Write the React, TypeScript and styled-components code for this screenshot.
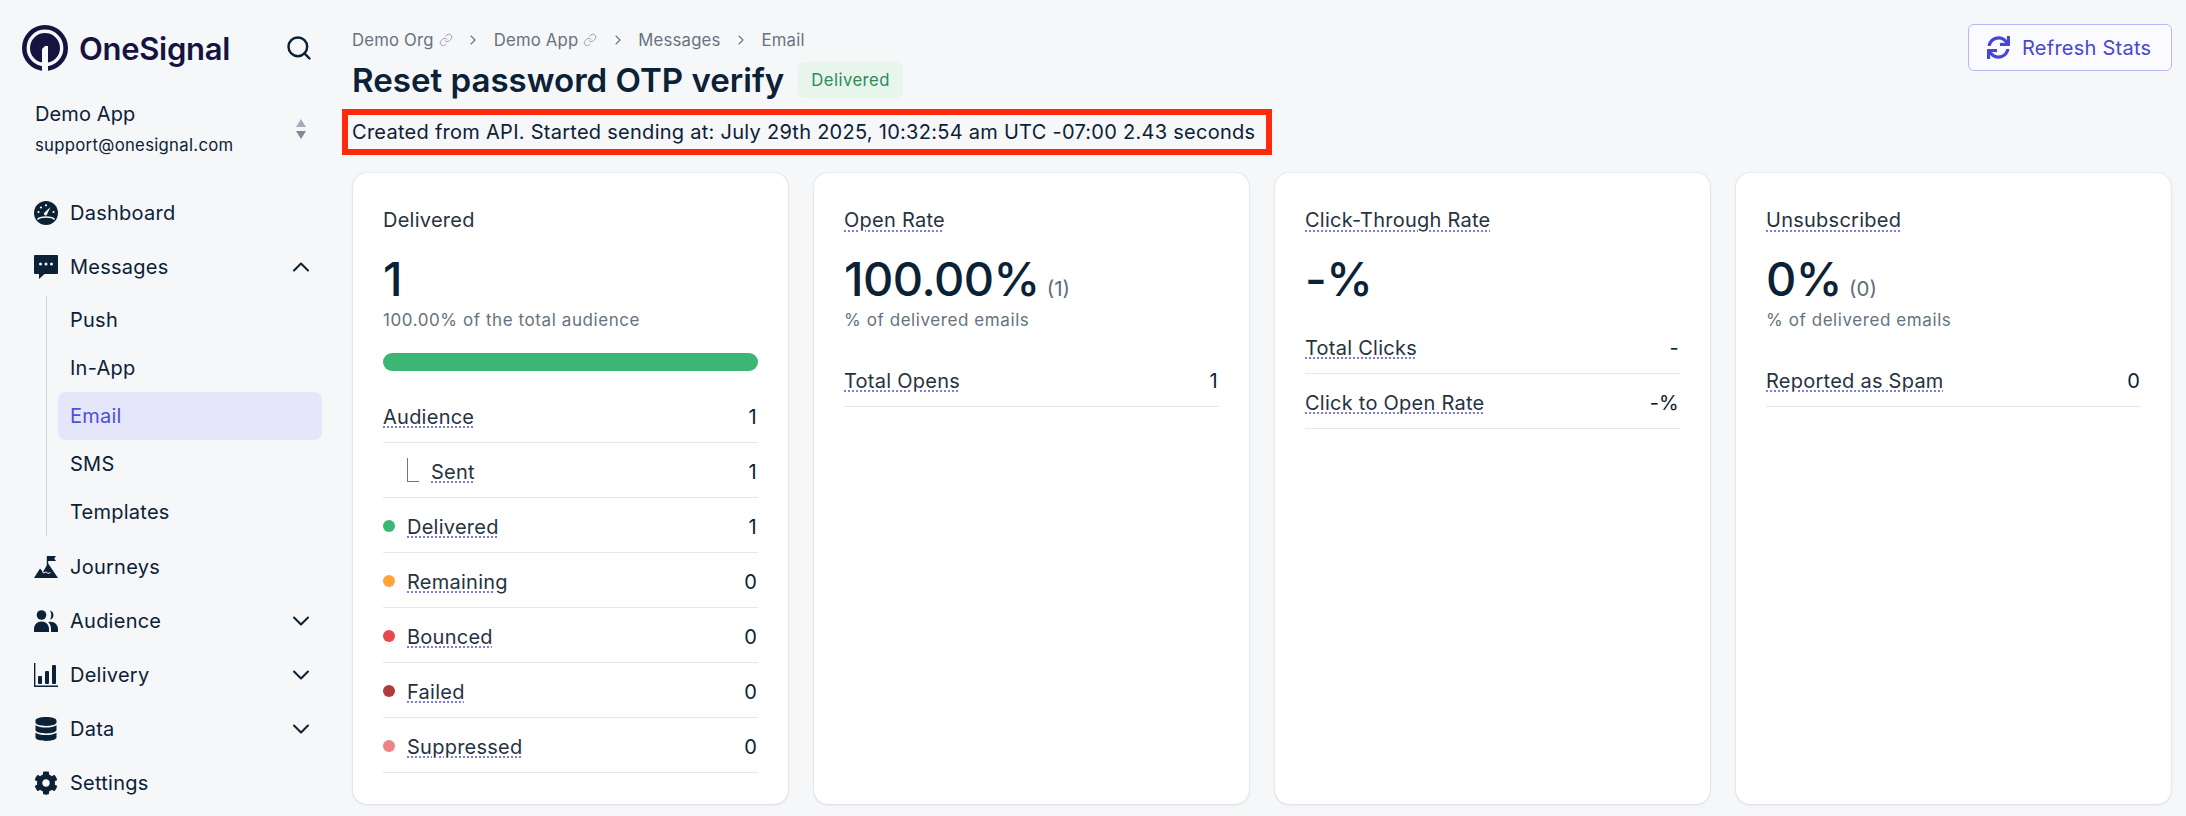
import React from 'react';
import styled, { createGlobalStyle } from 'styled-components';
import { ChevronDown, ChevronRight, ChevronUp, Link as LinkIcon, Search } from 'lucide-react';
import { FaCog, FaDatabase, FaSync } from 'react-icons/fa';

const GlobalStyle = createGlobalStyle`
  html, body {
    margin: 0;
    padding: 0;
    background: #f6f7f9;
    font-family: Inter, "Liberation Sans", sans-serif;
    color: #0b2136;
  }
  * { box-sizing: border-box; }
`;

const Page = styled.div`
  display: flex;
  width: 2186px;
  height: 816px;
  overflow: hidden;
  background: #f6f7f9;
`;

const Sidebar = styled.aside`
  flex: 0 0 342px;
  display: flex;
  flex-direction: column;
  padding-top: 25px;
`;

const LogoRow = styled.div`
  display: flex;
  align-items: center;
  height: 46px;
  padding: 0 29px 0 22px;
`;

const Wordmark = styled.span`
  margin-left: 11px;
  font-size: 31px;
  font-weight: 600;
  letter-spacing: -0.3px;
  color: #151440;
  flex: 1;
`;

const SearchButton = styled.span`
  display: flex;
  color: #0b2136;
`;

const AppSwitcher = styled.div`
  display: flex;
  align-items: center;
  justify-content: space-between;
  height: 115px;
  padding: 29px 36px 28px 35px;
`;

const AppName = styled.div`
  font-size: 20px;
  line-height: 28px;
  letter-spacing: 0.1px;
`;

const AppMail = styled.div`
  margin-top: 4px;
  font-size: 16.7px;
  line-height: 26px;
  letter-spacing: 0.3px;
`;

const Nav = styled.nav`
  display: flex;
  flex-direction: column;
`;

const NavItem = styled.div<{ $gap?: number }>`
  display: flex;
  align-items: center;
  height: 54px;
  margin-top: ${(p) => p.$gap ?? 0}px;
  padding: 0 27px 0 34px;
  font-size: 20px;
  letter-spacing: 0.25px;
`;

const NavIcon = styled.span`
  display: flex;
  align-items: center;
  justify-content: center;
  width: 24px;
  height: 24px;
  margin-right: 12px;
`;

const NavLabel = styled.span`
  flex: 1;
`;

const SubList = styled.div`
  display: flex;
  flex-direction: column;
  margin: 2px 0 0 46px;
  padding-left: 11px;
  width: 276px;
  border-left: 1.5px solid #ccd5de;
`;

const SubItem = styled.div<{ $active?: boolean }>`
  display: flex;
  align-items: center;
  height: 48px;
  padding-left: 12px;
  font-size: 20px;
  letter-spacing: 0.25px;
  border-radius: 8px;
  color: ${(p) => (p.$active ? '#4f4fd8' : '#0b2136')};
  background: ${(p) => (p.$active ? '#e5e6fa' : 'transparent')};
`;

const Main = styled.main`
  flex: 1;
  display: flex;
  flex-direction: column;
  min-width: 0;
  padding: 0 15px 12px 0;
`;

const TopBar = styled.div`
  display: flex;
  justify-content: space-between;
  padding-left: 10px;
`;

const Crumbs = styled.div`
  display: flex;
  align-items: center;
  height: 24px;
  margin-top: 28px;
  font-size: 16.7px;
  letter-spacing: 0.2px;
  color: #667280;
`;

const Crumb = styled.span`
  display: flex;
  align-items: center;
  gap: 5px;
`;

const CrumbSep = styled.span`
  display: flex;
  width: 41px;
  justify-content: center;
`;

const CrumbLink = styled.span`
  display: flex;
  color: #98a1ad;
`;

const RefreshButton = styled.button`
  display: flex;
  align-items: center;
  gap: 12px;
  height: 47px;
  width: 204px;
  margin: 24px -1px 0 0;
  padding: 0 0 0 18px;
  border: 1.5px solid #b7b8f5;
  border-radius: 6px;
  background: #fbfbff;
  color: #4747d1;
  font-family: inherit;
  font-size: 20px;
  letter-spacing: 0.25px;
`;

const TitleRow = styled.div`
  display: flex;
  align-items: center;
  gap: 14px;
  height: 36px;
  margin-top: -9px;
  padding-left: 10px;
`;

const Title = styled.h1`
  margin: 0;
  font-size: 33.1px;
  font-weight: 600;
  line-height: 36px;
  color: #0b2136;
`;

const Badge = styled.span`
  display: flex;
  align-items: center;
  height: 36px;
  padding: 0 13px;
  border-radius: 7px;
  background: #e7f5ec;
  color: #2f8a57;
  font-size: 16.7px;
  letter-spacing: 0.45px;
`;

const Meta = styled.div`
  align-self: flex-start;
  display: flex;
  align-items: center;
  height: 46px;
  margin-top: 11px;
  padding: 0 11px 0 4px;
  border: 6px solid #ff2a0c;
  font-size: 20px;
  letter-spacing: 0.27px;
  white-space: nowrap;
`;

const Cards = styled.div`
  flex: 1;
  display: grid;
  grid-template-columns: repeat(4, 435px);
  gap: 26px;
  margin: 18px 0 0 11px;
  min-height: 0;
`;

const Card = styled.section`
  display: flex;
  flex-direction: column;
  padding: 33px 30px 0;
  background: #fff;
  border-radius: 14px;
  box-shadow: 0 0 2px rgba(15, 30, 50, 0.16), 0 1px 3px rgba(15, 30, 50, 0.08);
`;

const Hint = styled.span`
  text-decoration: underline dotted #8079ee 2px;
  text-underline-offset: 3px;
`;

const CardTitle = styled.div`
  height: 28px;
  line-height: 28px;
  font-size: 20px;
  letter-spacing: 0.25px;
  color: #27323f;
`;

const BigRow = styled.div`
  display: flex;
  align-items: baseline;
  gap: 7px;
  height: 58px;
  margin-top: 16px;
  line-height: 58px;
  font-size: 47px;
  font-weight: 450;
  letter-spacing: -0.5px;
  color: #0b2136;
`;

const BigNote = styled.span`
  font-size: 20.5px;
  font-weight: 400;
  letter-spacing: 0;
  color: #5f6b7a;
`;

const SubText = styled.div`
  height: 24px;
  line-height: 24px;
  margin-bottom: 9px;
  font-size: 17px;
  letter-spacing: 0.58px;
  color: #667280;
`;

const Bar = styled.div`
  height: 18px;
  margin: 12px 0 6px;
  border-radius: 9px;
  background: #3cb675;
`;

const Rows = styled.div`
  display: flex;
  flex-direction: column;
  margin-top: 11px;
`;

const Row = styled.div`
  display: flex;
  align-items: center;
  height: 55px;
  padding-top: 3px;
  border-bottom: 1.5px solid #e5e8eb;
  font-size: 20px;
  letter-spacing: 0.25px;
  color: #27323f;
`;

const RowLabel = styled.span`
  flex: 1;
  display: flex;
  align-items: center;
`;

const RowValue = styled.span`
  color: #0b2136;
  padding-right: 1px;
`;

const Dot = styled.span<{ $color: string }>`
  width: 12px;
  height: 12px;
  margin: 0 12px 2px 0;
  border-radius: 50%;
  background: ${(p) => p.$color};
`;

const Branch = styled.span`
  width: 12px;
  height: 24px;
  margin: 0 12px 4px 24px;
  border-left: 1.5px solid #6b7785;
  border-bottom: 1.5px solid #6b7785;
`;

const Logo = () => (
  <svg width="46" height="46" viewBox="0 0 46 46">
    <circle cx="23" cy="23" r="20.7" fill="none" stroke="#151440" strokeWidth="4.6" />
    <circle cx="23" cy="23" r="15" fill="#151440" />
    <path d="M20 24l3-3h3v25h-6z" fill="#f6f7f9" />
  </svg>
);

const GaugeIcon = () => (
  <svg width="24" height="24" viewBox="0 0 24 24">
    <circle cx="12" cy="12" r="12" fill="#0b2136" />
    <path d="M3.5 18.5C6 15.2 18 15.2 20.500 18.500" fill="none" stroke="#f6f7f9" strokeWidth="1.500" />
    <path d="M16.500 6L13.300 12.700a1.700 1.700 0 1 1-2.800-1.300z" fill="#f6f7f9" />
    <g fill="#f6f7f9">
      <circle cx="4.500" cy="11" r="1.100" />
      <circle cx="7" cy="6.500" r="1.100" />
      <circle cx="12" cy="4.300" r="1.100" />
      <circle cx="19.500" cy="11" r="1.100" />
    </g>
  </svg>
);

const MessageIcon = () => (
  <svg width="24" height="24" viewBox="0 0 24 24">
    <path
      d="M1 0h22a1 1 0 0 1 1 1v17a1 1 0 0 1-1 1H10.500L5 24v-5H1a1 1 0 0 1-1-1V1a1 1 0 0 1 1-1z"
      fill="#0b2136"
    />
    <g fill="#f6f7f9">
      <circle cx="6.500" cy="9" r="1.500" />
      <circle cx="12" cy="9" r="1.500" />
      <circle cx="17.500" cy="9" r="1.500" />
    </g>
  </svg>
);

const JourneyIcon = () => (
  <svg width="24" height="24" viewBox="0 0 24 24">
    <path d="M0 23L6 13.500l3 3.500 4.500-8h1L24 23z" fill="#0b2136" />
    <path d="M8 16.500l2 1.500 2-1.200 2 1.700 2.500-1" fill="none" stroke="#f6f7f9" strokeWidth="1" />
    <path d="M13.500 10V1" stroke="#0b2136" strokeWidth="1.400" />
    <path d="M14 1h8l-1.800 2.400L22 6h-8z" fill="#0b2136" />
  </svg>
);

const AudienceIcon = () => (
  <svg width="24" height="24" viewBox="0 0 24 24">
    <circle cx="7.500" cy="6" r="4.800" fill="#0b2136" />
    <path d="M16 1.400a4.800 4.800 0 0 1 0 9.200c1.700-2.800 1.700-6.400 0-9.200z" fill="#0b2136" />
    <path d="M0 23v-3c0-4.500 3.300-7.500 7.500-7.500S15 15.500 15 20v3z" fill="#0b2136" />
    <path d="M17 23v-3c0-2.800-1-5.200-2.800-7 5-1.500 9.800 1.800 9.800 7v3z" fill="#0b2136" />
  </svg>
);

const DeliveryIcon = () => (
  <svg width="24" height="24" viewBox="0 0 24 24">
    <path d="M0 0h1.400v22.600H24V24H0z" fill="#0b2136" />
    <rect x="4" y="13" width="4" height="8" rx="1" fill="#0b2136" />
    <rect x="11" y="8" width="4" height="13" rx="1" fill="#0b2136" />
    <rect x="18" y="2" width="4" height="19" rx="1" fill="#0b2136" />
  </svg>
);

const SortIcon = () => (
  <svg width="10" height="20" viewBox="0 0 10 20">
    <path d="M5 0l5 8H0z" fill="#a3acb7" />
    <path d="M5 20L0 12h10z" fill="#7f8a97" />
  </svg>
);

type NavEntry = {
  label: string;
  icon: React.ReactNode;
  chevron?: 'up' | 'down';
  gap?: number;
};

const topNav: NavEntry[] = [
  { label: 'Dashboard', icon: <GaugeIcon /> },
  { label: 'Messages', icon: <MessageIcon />, chevron: 'up' },
];

const subNav = ['Push', 'In-App', 'Email', 'SMS', 'Templates'];

const bottomNav: NavEntry[] = [
  { label: 'Journeys', icon: <JourneyIcon />, gap: 4 },
  { label: 'Audience', icon: <AudienceIcon />, chevron: 'down' },
  { label: 'Delivery', icon: <DeliveryIcon />, chevron: 'down' },
  { label: 'Data', icon: <FaDatabase size={24} />, chevron: 'down' },
  { label: 'Settings', icon: <FaCog size={24} /> },
];

function NavRow({ item }: { item: NavEntry }) {
  return (
    <NavItem $gap={item.gap}>
      <NavIcon>{item.icon}</NavIcon>
      <NavLabel>{item.label}</NavLabel>
      {item.chevron === 'up' && <ChevronUp size={28} strokeWidth={1.8} />}
      {item.chevron === 'down' && <ChevronDown size={28} strokeWidth={1.8} />}
    </NavItem>
  );
}

type Stat = {
  label: string;
  value: string;
  dot?: string;
  branch?: boolean;
};

const deliveredRows: Stat[] = [
  { label: 'Audience', value: '1' },
  { label: 'Sent', value: '1', branch: true },
  { label: 'Delivered', value: '1', dot: '#3cb675' },
  { label: 'Remaining', value: '0', dot: '#ffa438' },
  { label: 'Bounced', value: '0', dot: '#e8484e' },
  { label: 'Failed', value: '0', dot: '#b23a3c' },
  { label: 'Suppressed', value: '0', dot: '#ee8286' },
];

function StatRows({ rows }: { rows: Stat[] }) {
  return (
    <Rows>
      {rows.map((row) => (
        <Row key={row.label}>
          <RowLabel>
            {row.dot && <Dot $color={row.dot} />}
            {row.branch && <Branch />}
            <Hint>{row.label}</Hint>
          </RowLabel>
          <RowValue>{row.value}</RowValue>
        </Row>
      ))}
    </Rows>
  );
}

export default function App() {
  return (
    <Page>
      <GlobalStyle />
      <Sidebar>
        <LogoRow>
          <Logo />
          <Wordmark>OneSignal</Wordmark>
          <SearchButton>
            <Search size={28} strokeWidth={2.1} />
          </SearchButton>
        </LogoRow>
        <AppSwitcher>
          <div>
            <AppName>Demo App</AppName>
            <AppMail>support@onesignal.com</AppMail>
          </div>
          <SortIcon />
        </AppSwitcher>
        <Nav>
          {topNav.map((item) => (
            <NavRow key={item.label} item={item} />
          ))}
          <SubList>
            {subNav.map((label) => (
              <SubItem key={label} $active={label === 'Email'}>
                {label}
              </SubItem>
            ))}
          </SubList>
          {bottomNav.map((item) => (
            <NavRow key={item.label} item={item} />
          ))}
        </Nav>
      </Sidebar>

      <Main>
        <TopBar>
          <Crumbs>
            <Crumb>
              Demo Org
              <CrumbLink>
                <LinkIcon size={14} strokeWidth={1.6} />
              </CrumbLink>
            </Crumb>
            <CrumbSep>
              <ChevronRight size={16} strokeWidth={1.6} />
            </CrumbSep>
            <Crumb>
              Demo App
              <CrumbLink>
                <LinkIcon size={14} strokeWidth={1.6} />
              </CrumbLink>
            </Crumb>
            <CrumbSep>
              <ChevronRight size={16} strokeWidth={1.6} />
            </CrumbSep>
            <Crumb>Messages</Crumb>
            <CrumbSep>
              <ChevronRight size={16} strokeWidth={1.6} />
            </CrumbSep>
            <Crumb>Email</Crumb>
          </Crumbs>
          <RefreshButton>
            <FaSync size={23} />
            Refresh Stats
          </RefreshButton>
        </TopBar>
        <TitleRow>
          <Title>Reset password OTP verify</Title>
          <Badge>Delivered</Badge>
        </TitleRow>
        <Meta>Created from API. Started sending at: July 29th 2025, 10:32:54 am UTC -07:00 2.43 seconds</Meta>

        <Cards>
          <Card>
            <CardTitle>Delivered</CardTitle>
            <BigRow>1</BigRow>
            <SubText>100.00% of the total audience</SubText>
            <Bar />
            <StatRows rows={deliveredRows} />
          </Card>
          <Card>
            <CardTitle>
              <Hint>Open Rate</Hint>
            </CardTitle>
            <BigRow>
              100.00%<BigNote>(1)</BigNote>
            </BigRow>
            <SubText>% of delivered emails</SubText>
            <StatRows rows={[{ label: 'Total Opens', value: '1' }]} />
          </Card>
          <Card>
            <CardTitle>
              <Hint>Click-Through Rate</Hint>
            </CardTitle>
            <BigRow>-%</BigRow>
            <StatRows
              rows={[
                { label: 'Total Clicks', value: '-' },
                { label: 'Click to Open Rate', value: '-%' },
              ]}
            />
          </Card>
          <Card>
            <CardTitle>
              <Hint>Unsubscribed</Hint>
            </CardTitle>
            <BigRow>
              0%<BigNote>(0)</BigNote>
            </BigRow>
            <SubText>% of delivered emails</SubText>
            <StatRows rows={[{ label: 'Reported as Spam', value: '0' }]} />
          </Card>
        </Cards>
      </Main>
    </Page>
  );
}
